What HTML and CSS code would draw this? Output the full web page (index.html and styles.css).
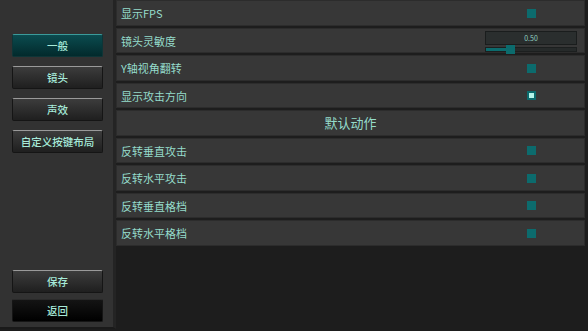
FILE: index.html
```html
<!DOCTYPE html>
<html lang="zh">
<head>
    <meta charset="UTF-8">
    <title>设置</title>
    <link rel="stylesheet" href="styles.css">
</head>
<body>
    <div class="screen">

        <!-- menu laterale -->
        <div class="sidebar">
            <div class="tabs">
                <div class="btn active">一般</div>
                <div class="btn">镜头</div>
                <div class="btn">声效</div>
                <div class="btn">自定义按键布局</div>
            </div>
            <div class="actions">
                <div class="btn">保存</div>
                <div class="btn dark">返回</div>
            </div>
        </div>

        <!-- lista opzioni -->
        <div class="options">
            <div class="row">
                <span class="label">显示FPS</span>
                <div class="control"><div class="check"></div></div>
            </div>
            <div class="row">
                <span class="label">镜头灵敏度</span>
                <div class="control slider">
                    <div class="value">0.50</div>
                    <div class="track">
                        <div class="fill" style="width: 22%"></div>
                        <div class="handle"></div>
                    </div>
                </div>
            </div>
            <div class="row">
                <span class="label">Y轴视角翻转</span>
                <div class="control"><div class="check"></div></div>
            </div>
            <div class="row">
                <span class="label">显示攻击方向</span>
                <div class="control"><div class="check on"></div></div>
            </div>
            <div class="row header">默认动作</div>
            <div class="row">
                <span class="label">反转垂直攻击</span>
                <div class="control"><div class="check"></div></div>
            </div>
            <div class="row">
                <span class="label">反转水平攻击</span>
                <div class="control"><div class="check"></div></div>
            </div>
            <div class="row">
                <span class="label">反转垂直格档</span>
                <div class="control"><div class="check"></div></div>
            </div>
            <div class="row">
                <span class="label">反转水平格档</span>
                <div class="control"><div class="check"></div></div>
            </div>
        </div>

    </div>
</body>
</html>
```

FILE: styles.css
```css
/* --- GENERALE --- */
html, body {
    margin: 0;
    padding: 0;
    width: 100%;
    height: 100%;
    overflow: hidden;
    background: #1d1d1d;
    font-family: "Noto Sans CJK SC", "Noto Sans", sans-serif;
    color: #95dccb;
}

.screen {
    display: flex;
    height: 100%;
}

/* --- SIDEBAR --- */
.sidebar {
    width: 116px;
    flex-shrink: 0;
    height: 329px;
    background: #323232;
    border-right: 3px solid #242424;
    border-bottom: 2px solid #1a1a1a;
    display: flex;
    flex-direction: column;
    justify-content: space-between;
    padding: 34px 0 5px;
    box-sizing: border-box;
}

.tabs {
    display: flex;
    flex-direction: column;
    gap: 9px;
}

.actions {
    display: flex;
    flex-direction: column;
    gap: 6px;
}

.btn {
    margin: 0 10px 0 12px;
    height: 23px;
    box-sizing: border-box;
    display: flex;
    align-items: center;
    justify-content: center;
    font-size: 10.5px;
    font-weight: 500;
    color: #a6ead9;
    background: linear-gradient(#3c3c3c, #1f1f1f);
    border: 1px solid #151515;
    border-top: 1px solid #9a9a9a;
    border-radius: 2px;
}

.btn.active {
    background: linear-gradient(#0b4b4f, #022a2c);
    border-color: #0e3537;
    border-top: 1px solid #3b9a9a;
}

.btn.dark {
    background: linear-gradient(#141414, #000);
    border-top-color: #2a2a2a;
}

/* --- OPZIONI --- */
.options {
    flex: 1;
    display: flex;
    flex-direction: column;
    gap: 1.75px;
    padding-right: 3px;
}

.row {
    height: 25.75px;
    flex-shrink: 0;
    box-sizing: border-box;
    background: #373737;
    border: 1px solid #2c2c2c;
    display: flex;
    align-items: center;
    justify-content: space-between;
    padding: 1px 0 0 4px;
    font-size: 11px;
}

.row.header {
    justify-content: center;
    padding: 0;
    font-size: 13px;
}

.control {
    width: 92px;
    margin-right: 7px;
    display: flex;
    justify-content: center;
}

.check {
    width: 9px;
    height: 9px;
    background: #0c6b6d;
}

.check.on {
    box-sizing: border-box;
    border: 2px solid #0c6b6d;
    background: #b4f4ea;
}

/* slider sensibilità */
.slider {
    flex-direction: column;
    gap: 2px;
    margin-top: 1px;
}

.value {
    height: 14px;
    box-sizing: border-box;
    background: #2a2e2e;
    border: 1px solid #1a1d1d;
    font-size: 7px;
    line-height: 12px;
    text-align: center;
    color: #8fcfc0;
}

.track {
    position: relative;
    height: 5px;
    background: #262a2a;
    border: 1px solid #1c1f1f;
    box-sizing: border-box;
}

.fill {
    height: 100%;
    background: #0c6b6d;
}

.handle {
    position: absolute;
    left: 20px;
    top: -3px;
    width: 9px;
    height: 9px;
    background: #0c6b6d;
}
```
